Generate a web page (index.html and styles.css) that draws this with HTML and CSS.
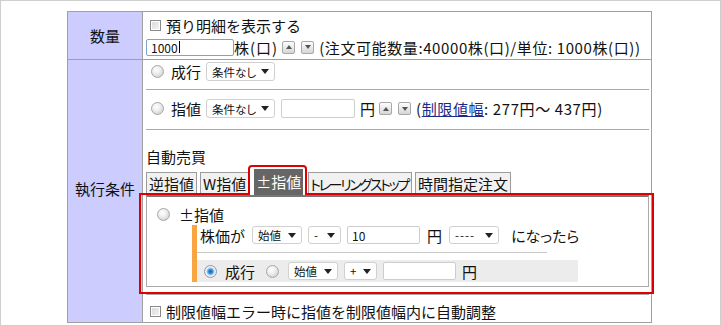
FILE: index.html
```html
<!DOCTYPE html>
<html lang="ja">
<head>
  <meta charset="UTF-8">
  <title>注文入力</title>
  <link rel="stylesheet" href="styles.css">
</head>
<body>

  <div class="frame">
    <table class="order">
      <!-- 数量 -->
      <tr class="row-qty">
        <th>数量</th>
        <td class="cell">
          <div class="line"><span class="check"></span>預り明細を表示する</div>
          <div class="line">
            <span class="field focus w88">1000<i class="caret"></i></span><span class="unit">株(口)</span>
            <span class="spin up"></span><span class="spin down"></span>
            <span class="note">(注文可能数量:40000株(口)/単位: 1000株(口))</span>
          </div>
        </td>
      </tr>

      <!-- 執行条件 -->
      <tr>
        <th class="exec">執行条件</th>
        <td class="cell cond">
          <div class="opt opt-market">
            <span class="radio"></span><span class="lbl">成行</span>
            <span class="sel w69">条件なし</span>
          </div>

          <div class="opt opt-limit">
            <span class="radio"></span><span class="lbl">指値</span>
            <span class="sel w69">条件なし</span>
            <span class="field w74"></span><span class="yen">円</span>
            <span class="spin up"></span><span class="spin down"></span>
            <span class="note">(<a href="#">制限値幅</a>: 277円～ 437円)</span>
          </div>

          <div class="auto">
            <div class="title">自動売買</div>
            <div class="tabs">
              <span class="tab">逆指値</span>
              <span class="tab">W指値</span>
              <span class="tab active">±指値</span>
              <span class="tab narrow">トレーリングストップ</span>
              <span class="tab">時間指定注文</span>
            </div>
            <div class="panel">
              <div class="panel-head">
                <span class="radio"></span><span class="lbl">±指値</span>
              </div>
              <div class="trigger">
                <div class="trig-line">
                  <span class="lbl">株価が</span>
                  <span class="sel w50">始値</span>
                  <span class="sel w33">-</span>
                  <span class="field w73">10</span>
                  <span class="yen">円</span>
                  <span class="sel w50 dash">----</span>
                  <span class="lbl then">になったら</span>
                </div>
                <div class="trig-sep"></div>
                <div class="trig-exec">
                  <span class="radio on"></span><span class="lbl">成行</span>
                  <span class="radio alt"></span>
                  <span class="sel w50">始値</span>
                  <span class="sel w33">+</span>
                  <span class="field w73"></span>
                  <span class="yen">円</span>
                </div>
              </div>
            </div>
          </div>

          <div class="opt opt-adjust">
            <span class="check"></span>制限値幅エラー時に指値を制限値幅内に自動調整
          </div>
        </td>
      </tr>
    </table>

    <!-- red highlight drawn over the tab and panel -->
    <svg class="mark" width="721" height="326" viewBox="0 0 721 326">
      <path d="M140 194 H249 V169 Q249 166 252 166 H303 Q306 166 306 169 V194 H653 V293 H140 Z"
            fill="none" stroke="#dc0000" stroke-width="2"/>
    </svg>
  </div>

</body>
</html>
```

FILE: styles.css
```css
/* ================================
   Page frame
   ================================ */
body {
  margin: 0;
  font-family: "Noto Sans CJK JP", "Liberation Sans", sans-serif;
  font-size: 15px;
  color: #111;
}

.frame {
  position: relative;
  width: 721px;
  height: 326px;
  box-sizing: border-box;
  border: 1px solid #cfcfcf;
  overflow: hidden;
  background: #fff;
}

.mark {
  position: absolute;
  left: -1px;
  top: -1px;
  pointer-events: none;
}

/* ================================
   Order table
   ================================ */
.order {
  margin: 10px 0 0 66px;
  width: 585px;
  border-collapse: collapse;
  border: 1px solid #a0a0a0;
}

.order th {
  width: 74px;
  padding: 0;
  background: #ccccff;
  border: 1px solid #a0a0a0;
  font-weight: normal;
  text-align: center;
}

.order th.exec {
  vertical-align: top;
  padding-top: 119px;
  line-height: 20px;
}

.order td {
  padding: 0;
  border: 1px solid #a0a0a0;
  vertical-align: top;
}

.cell {
  padding: 0 2px 0 3px !important;
}

.row-qty .cell {
  padding-top: 2px !important;
  padding-bottom: 1px !important;
}

.line {
  height: 22px;
  display: flex;
  align-items: center;
  white-space: nowrap;
}

.unit { letter-spacing: 1px; }

/* ================================
   Form bits (drawn, not native)
   ================================ */
.check {
  width: 9px;
  height: 9px;
  margin: 0 5px 0 4px;
  border: 1px solid #8a8a8a;
  background: linear-gradient(135deg, #d8d8d8, #f4f4f4);
  box-shadow: inset 0 0 0 1px #fff;
  flex: none;
}

.radio {
  width: 11px;
  height: 11px;
  border-radius: 50%;
  border: 1px solid #a8a8a8;
  background: radial-gradient(circle at 40% 35%, #fff 0, #eee 40%, #c4c4c4 100%);
  flex: none;
}

.radio.on {
  background: radial-gradient(circle at 50% 50%, #1a5fa8 0, #3b93dc 28%, #8fc2ee 42%, #f4f4f4 58%, #d8d8d8 100%);
  border-color: #8a9aaa;
}

.field {
  height: 17px;
  box-sizing: border-box;
  border: 1px solid #cdcdcd;
  border-radius: 2px;
  background: #fff;
  font-size: 12px;
  line-height: 15px;
  padding-left: 4px;
  display: inline-flex;
  align-items: center;
  flex: none;
}

.field.focus {
  border-color: #7da2ce;
  height: 17px;
}

.caret {
  width: 1px;
  height: 12px;
  background: #000;
  margin-left: 1px;
}

.sel {
  height: 19px;
  box-sizing: border-box;
  border: 1px solid #d0d0d0;
  border-radius: 3px;
  background: #fff;
  font-size: 11.5px;
  font-feature-settings: "palt";
  padding: 0 5px 0 5px;
  display: inline-flex;
  align-items: center;
  justify-content: space-between;
  flex: none;
}

.sel::after {
  content: "";
  border-left: 4px solid transparent;
  border-right: 4px solid transparent;
  border-top: 5px solid #222;
}

.sel.dash { letter-spacing: 1px; }

.spin {
  width: 11px;
  height: 11px;
  border: 1px solid #a8a8a8;
  border-radius: 2px;
  background: linear-gradient(#fdfdfd, #d6d6d6);
  display: inline-flex;
  align-items: center;
  justify-content: center;
  flex: none;
}

.spin.up::after {
  content: "";
  border-left: 3px solid transparent;
  border-right: 3px solid transparent;
  border-bottom: 4px solid #555;
}

.spin.down::after {
  content: "";
  border-left: 3px solid transparent;
  border-right: 3px solid transparent;
  border-top: 4px solid #555;
}

.w88 { width: 88px; }
.w69 { width: 69px; }
.w74 { width: 74px; }
.w73 { width: 73px; }
.w50 { width: 50px; }
.w33 { width: 33px; }

.spin.up { margin-left: 4px; }
.spin.down { margin-left: 6px; }
.note { margin-left: 5px; letter-spacing: 0.6px; }

a {
  color: #1c2a8c;
}

/* ================================
   執行条件 options
   ================================ */
.opt {
  display: flex;
  align-items: center;
  white-space: nowrap;
}

.opt .radio { margin: 0 7px 0 5px; }
.opt .lbl { margin-right: 5px; }
.opt .field { margin-left: 6px; height: 19px; }
.opt .yen { margin: 0 0 0 5px; }

.opt-market {
  height: 19px;
  padding: 2px 0 8px;
  border-bottom: 1px solid #a8a8a8;
}

.opt-limit {
  height: 19px;
  padding: 9px 0 11px;
  border-bottom: 1px solid #a8a8a8;
}

.opt-adjust {
  height: 22px;
  padding-top: 5px;
  border-top: 1px solid #a8a8a8;
}

/* ================================
   自動売買 tabs + panel
   ================================ */
.auto {
  padding: 16px 0 7px;
}

.title {
  line-height: 22px;
}

.tabs {
  display: flex;
  align-items: flex-end;
  gap: 3px;
  margin-top: 1px;
  height: 26px;
}

.tab {
  height: 23px;
  box-sizing: border-box;
  border: 1px solid #9c9c9c;
  border-bottom: none;
  background: #f1f1f1;
  padding: 0 2px;
  line-height: 22px;
  white-space: nowrap;
}

.tab.active {
  height: 26px;
  margin: 0 2px;
  border: none;
  background: #666;
  color: #fff;
  padding: 2px 2px 0;
}

.tab.narrow {
  font-size: 14px;
  font-feature-settings: "palt";
  letter-spacing: -2.3px;
  padding: 0 3px 0 1px;
}

.panel {
  border: 1px solid #aaa;
  border-top: 2px solid #777;
  padding: 7px 0 4px;
}

.panel-head {
  display: flex;
  align-items: center;
  height: 21px;
}

.panel-head .radio { margin: 0 9px 0 10px; }

.trigger {
  margin-left: 45px;
  border-left: 5px solid #f9a541;
}

.trig-line {
  display: flex;
  align-items: center;
  height: 20px;
  white-space: nowrap;
}

.trig-line .lbl { margin: 0 7px 0 3px; }
.trig-line .sel { height: 18px; margin-right: 6px; }
.trig-line .field { height: 18px; }
.trig-line .yen { margin: 0 7px 0 7px; }
.trig-line .then { margin-left: 6px; font-feature-settings: "palt"; }

.trig-sep {
  width: 350px;
  margin: 7px 0;
  border-top: 1px solid #c8c8c8;
}

.trig-exec {
  width: 381px;
  height: 22px;
  background: #ececec;
  display: flex;
  align-items: center;
  white-space: nowrap;
}

.trig-exec .radio { margin: 0 8px 0 7px; }
.trig-exec .lbl { margin-right: 11px; }
.trig-exec .radio.alt { margin: 0 9px 0 0; }
.trig-exec .sel { height: 18px; margin-right: 6px; }
.trig-exec .field { height: 18px; }
.trig-exec .yen { margin-left: 6px; }
```
